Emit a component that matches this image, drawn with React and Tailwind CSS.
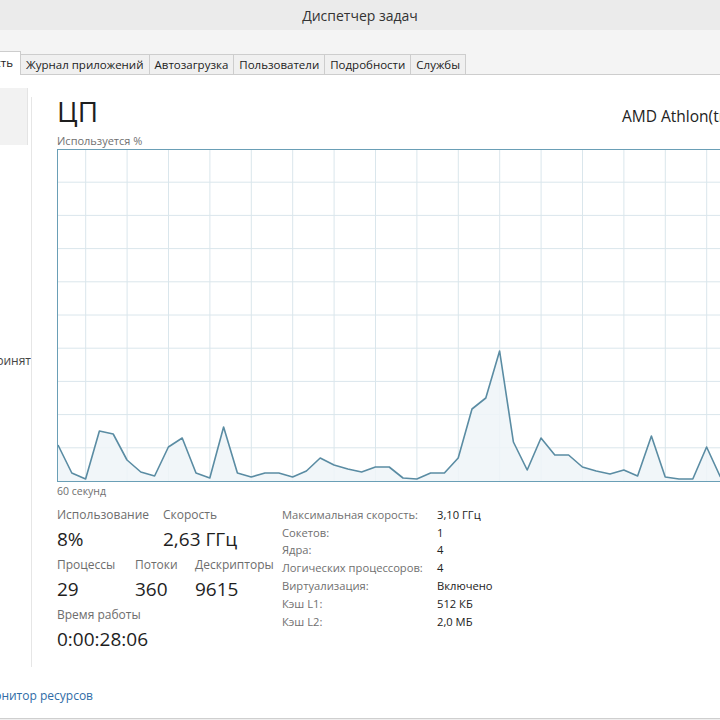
const tabs = ["Журнал приложений", "Автозагрузка", "Пользователи", "Подробности", "Службы"];

const cpu = [445, 473, 479, 431, 434, 460, 472, 476, 447, 438, 473, 478, 427, 473, 477, 473, 473, 477, 471, 458, 465, 469, 472, 467, 467, 478, 479, 473, 473, 458, 409, 398, 351, 442, 470, 438, 455, 455, 467, 471, 474, 470, 476, 436, 477, 479, 479, 447, 477];

const info = [
  ["Максимальная скорость:", "3,10 ГГц"],
  ["Сокетов:", "1"],
  ["Ядра:", "4"],
  ["Логических процессоров:", "4"],
  ["Виртуализация:", "Включено"],
  ["Кэш L1:", "512 КБ"],
  ["Кэш L2:", "2,0 МБ"],
];

function Stat({ label, value, className }) {
  return (
    <div className={className}>
      <div className="text-[12px] leading-[18px] text-[#6d6d6d] whitespace-nowrap">{label}</div>
      <div className="mt-[2px] text-[19px] leading-[26px] text-[#1e1e1e] whitespace-nowrap">{value}</div>
    </div>
  );
}

function CpuGraph() {
  let w = 700;
  let h = 333;
  let pts = cpu.map((y, i) => [1 + 13.8 * i, y - 149]);
  let line = pts.map((p) => p.join(",")).join(" ");
  let area = `1,${h - 1} ${line} ${pts[pts.length - 1][0]},${h - 1}`;
  return (
    <svg width={w} height={h} className="block">
      <rect x="0" y="0" width={w} height={h} fill="#ffffff" />
      {Array.from({ length: 17 }, (_, k) => (
        <line key={"v" + k} x1={28.7 + 41.4 * k} y1="0" x2={28.7 + 41.4 * k} y2={h} stroke="#dae6ec" strokeWidth="1" />
      ))}
      {Array.from({ length: 9 }, (_, k) => (
        <line key={"h" + k} x1="0" y1={h - 1 - 33.2 * (k + 1)} x2={w} y2={h - 1 - 33.2 * (k + 1)} stroke="#dae6ec" strokeWidth="1" />
      ))}
      <polygon points={area} fill="#eef4f8" fillOpacity="0.85" />
      <polyline points={line} fill="none" stroke="#5a8ca3" strokeWidth="1.6" strokeLinejoin="round" />
      <rect x="0.5" y="0.5" width={w} height={h - 1} fill="none" stroke="#6a9fb6" strokeWidth="1" />
    </svg>
  );
}

export default function App() {
  return (
    <div className="w-[720px] h-[720px] overflow-hidden bg-white flex flex-col text-[#222]" style={{ fontFamily: '"Open Sans", "Noto Sans", sans-serif' }}>
      <div className="h-[30px] shrink-0 bg-[#ebebeb] flex items-center justify-center text-[14px] text-[#333]">
        Диспетчер задач
      </div>
      <div className="h-[22px] shrink-0 bg-[#f4f4f4]" />
      <div className="h-[23px] shrink-0 flex items-end border-b border-[#cdcdcd] bg-[#f4f4f4]">
        <div className="w-[21px] h-[24px] -mb-px overflow-hidden flex justify-end bg-white border border-b-0 border-[#cdcdcd] border-l-0">
          <span className="text-[11.5px] leading-[22px] pr-[7px] whitespace-nowrap">Производительность</span>
        </div>
        {tabs.map((t) => (
          <div key={t} className="h-[20px] px-[5px] bg-[#f0f0f0] border border-b-0 border-l-0 border-[#cdcdcd] text-[11.5px] leading-[19px] whitespace-nowrap">
            {t}
          </div>
        ))}
      </div>
      <div className="flex flex-1 min-h-0">
        <div className="w-[31px] shrink-0 flex flex-col">
          <div className="mt-[13px] h-[57px] w-[28px] bg-[#f2f2f2] border-r border-[#e4e4e4]" />
          <div className="mt-[208px] w-[31px] overflow-hidden flex justify-end">
            <span className="text-[12px] leading-[16px] text-[#444] whitespace-nowrap">Принят</span>
          </div>
        </div>
        <div className="w-px shrink-0 bg-[#e6e6e6] mt-[22px] mb-[15px]" />
        <div className="pl-[25px] flex flex-col min-w-0">
          <div className="mt-[20px] flex items-baseline">
            <div className="w-[565px] shrink-0 text-[28px] leading-[32px] text-[#1e1e1e]">ЦП</div>
            <div className="text-[15.5px] whitespace-nowrap text-[#222]">AMD Athlon(tm) II X4 640 Processor</div>
          </div>
          <div className="mt-[6px] text-[11px] leading-[14px] text-[#707070]">Используется %</div>
          <div className="mt-[1px]">
            <CpuGraph />
          </div>
          <div className="mt-[2px] text-[10.5px] leading-[14px] text-[#707070]">60 секунд</div>
          <div className="mt-[8px] flex">
            <div className="w-[225px] shrink-0 flex flex-col gap-[4px]">
              <div className="flex">
                <Stat className="w-[106px]" label="Использование" value="8%" />
                <Stat label="Скорость" value="2,63 ГГц" />
              </div>
              <div className="flex">
                <Stat className="w-[78px]" label="Процессы" value="29" />
                <Stat className="w-[60px]" label="Потоки" value="360" />
                <Stat label="Дескрипторы" value="9615" />
              </div>
              <Stat label="Время работы" value="0:00:28:06" />
            </div>
            <div className="flex flex-col">
              {info.map(([k, v]) => (
                <div key={k} className="flex h-[17.8px] items-center text-[11.2px]">
                  <div className="w-[155px] text-[#707070] whitespace-nowrap">{k}</div>
                  <div className="text-[#222] whitespace-nowrap">{v}</div>
                </div>
              ))}
            </div>
          </div>
        </div>
      </div>
      <div className="h-[38px] shrink-0 flex flex-col">
        <div className="h-[28px] w-[93px] overflow-hidden flex justify-end items-center">
          <span className="text-[12px] text-[#2f6ca6] whitespace-nowrap">Открыть монитор ресурсов</span>
        </div>
        <div className="flex-1" />
        <div className="h-[2px] border-t border-[#cfcfcf] bg-[#efefef]" />
      </div>
    </div>
  );
}
